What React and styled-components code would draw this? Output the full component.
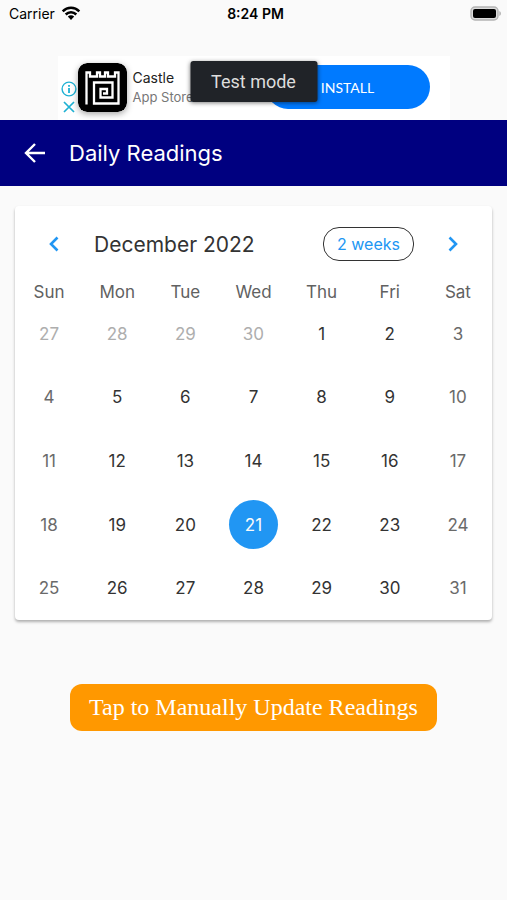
import { useState } from "react";
import styled, { createGlobalStyle } from "styled-components";

const weekdays = ["Sun", "Mon", "Tue", "Wed", "Thu", "Fri", "Sat"];

const weeks = [
  [27, 28, 29, 30, 1, 2, 3],
  [4, 5, 6, 7, 8, 9, 10],
  [11, 12, 13, 14, 15, 16, 17],
  [18, 19, 20, 21, 22, 23, 24],
  [25, 26, 27, 28, 29, 30, 31],
];

const StatusBar = () => (
  <Status>
    <Carrier>
      Carrier
      <svg width="20" height="15" viewBox="0 0 20 15" aria-hidden="true">
        <g fill="none" stroke="#000" strokeWidth="2.5">
          <path d="M1.7 5.3C6.4.6 13.6.6 18.3 5.3" />
          <path d="M4.7 8.5c3-3 7.6-3 10.6 0" />
        </g>
        <path d="M10 14l-3.2-3.4c1.8-1.7 4.6-1.7 6.4 0z" />
      </svg>
    </Carrier>
    <Clock>8:24 PM</Clock>
    <Battery>
      <svg width="32" height="15" viewBox="0 0 32 15" aria-hidden="true">
        <rect x="1" y="1" width="27" height="13" rx="4" fill="#ddd" stroke="#b4b4b4" strokeWidth="1.4" />
        <rect x="3" y="3" width="23" height="9" rx="2" />
        <path d="M29.3 5c2.2.8 2.2 4.2 0 5z" fill="#b4b4b4" />
      </svg>
    </Battery>
  </Status>
);

const AdBanner = () => (
  <Ad>
    <AdMarks>
      <button type="button" aria-label="Ad information">
        <svg width="16" height="16" viewBox="0 0 16 16">
          <circle cx="8" cy="8" r="6.9" fill="none" stroke="#1fb1d3" strokeWidth="1.4" />
          <path d="M8 7v5M8 4v1.8" stroke="#1fb1d3" strokeWidth="1.8" />
        </svg>
      </button>
      <button type="button" aria-label="Close ad">
        <svg width="16" height="16" viewBox="0 0 16 16">
          <path d="M3 3l10 10M13 3L3 13" stroke="#1fb1d3" strokeWidth="1.7" />
        </svg>
      </button>
    </AdMarks>
    <AdIcon viewBox="0 0 49 49" aria-hidden="true">
      <rect width="49" height="49" rx="9" />
      <path
        d="M8.5 41.5V9.500h3.500v4h7v-4h3v4h5v-4h3v4h7v-4h3.500V40.500H16V19.500H34.500V34.500H22.500V26H29V30.500H25"
        fill="none"
        stroke="#fff"
        strokeWidth="2.3"
      />
    </AdIcon>
    <AdText>
      <strong>Castle</strong>
      <span>App Store</span>
    </AdText>
    <Install type="button">INSTALL</Install>
    <TestMode>Test mode</TestMode>
  </Ad>
);

const App = () => {
  const [selected, setSelected] = useState("3-3");

  return (
    <Container>
      <GlobalStyle />
      <StatusBar />
      <AdBanner />
      <Header>
        <IconButton type="button" aria-label="Back">
          <svg width="24" height="24" viewBox="0 0 24 24">
            <path d="M22 12H3M12 3l-9 9 9 9" fill="none" stroke="#fff" strokeWidth="2.4" />
          </svg>
        </IconButton>
        <h1>Daily Readings</h1>
      </Header>
      <main>
        <Card>
          <CalendarHeader>
            <IconButton type="button" aria-label="Previous month">
              <svg width="24" height="24" viewBox="0 0 24 24">
                <path d="M15.500 5.500L9 12l6.500 6.500" fill="none" stroke="#2196f3" strokeWidth="2.6" />
              </svg>
            </IconButton>
            <h2>December 2022</h2>
            <FormatButton type="button">2 weeks</FormatButton>
            <IconButton type="button" aria-label="Next month">
              <svg width="24" height="24" viewBox="0 0 24 24">
                <path d="M8.500 5.500L15 12l-6.500 6.500" fill="none" stroke="#2196f3" strokeWidth="2.6" />
              </svg>
            </IconButton>
          </CalendarHeader>
          <Calendar>
            <thead>
              <tr>
                {weekdays.map((name) => (
                  <th key={name} scope="col">{name}</th>
                ))}
              </tr>
            </thead>
            <tbody>
              {weeks.map((week, row) => (
                <tr key={row}>
                  {week.map((day, col) => {
                    const id = `${row}-${col}`;
                    return (
                      <td key={id}>
                        <Day
                          type="button"
                          $outside={row === 0 && day > 7}
                          $weekend={col === 0 || col === 6}
                          $selected={selected === id}
                          aria-pressed={selected === id}
                          onClick={() => setSelected(id)}
                        >
                          {day}
                        </Day>
                      </td>
                    );
                  })}
                </tr>
              ))}
            </tbody>
          </Calendar>
        </Card>
        <UpdateButton type="button">Tap to Manually Update Readings</UpdateButton>
      </main>
    </Container>
  );
};

export default App;

const GlobalStyle = createGlobalStyle`
  * {
    box-sizing: border-box;
  }

  body {
    margin: 0;
    background-color: #fafafa;
    font-family: Inter, "Liberation Sans", sans-serif;
  }

  button {
    padding: 0;
    border: none;
    background: none;
    font-family: inherit;
    cursor: pointer;
  }

  svg {
    display: block;
  }
`;

const Container = styled.div`
  min-height: 100vh;
  background-color: #fafafa;
`;

const Status = styled.div`
  display: grid;
  grid-template-columns: 1fr auto 1fr;
  align-items: center;
  height: 27px;
  padding: 0 5px 0 9px;
  font-size: 14px;
  color: #000;
`;

const Carrier = styled.div`
  display: flex;
  align-items: center;
  gap: 6px;
`;

const Clock = styled.div`
  font-weight: 600;
`;

const Battery = styled.div`
  display: flex;
  justify-content: flex-end;
`;

const Ad = styled.section`
  position: relative;
  display: flex;
  align-items: center;
  width: 392px;
  max-width: 100%;
  height: 64px;
  margin: 29px auto 0;
  padding: 0 20px 2px 3px;
  background-color: #fff;
`;

const AdMarks = styled.div`
  display: flex;
  flex-direction: column;
  align-self: flex-end;
  gap: 2px;
  margin-bottom: 3px;
`;

const AdIcon = styled.svg`
  flex: none;
  width: 49px;
  height: 49px;
  margin-left: 1px;
  border-radius: 9px;
  box-shadow: 0 2px 6px rgba(0, 0, 0, 0.35);
`;

const AdText = styled.div`
  display: flex;
  flex-direction: column;
  flex: 1;
  gap: 1px;
  margin-left: 6px;
  line-height: 18px;

  strong {
    font-size: 14px;
    font-weight: 400;
    color: #222;
  }

  span {
    font-size: 13px;
    color: #777;
  }
`;

const Install = styled.button`
  width: 164px;
  height: 44px;
  border-radius: 22px;
  background-color: #007aff;
  color: #fff;
  font-family: Lato, sans-serif;
  font-size: 14px;
`;

const TestMode = styled.div`
  position: absolute;
  top: 5px;
  left: 50%;
  transform: translateX(-50%);
  width: 127px;
  border-radius: 3px;
  background-color: #202328;
  color: #ddd;
  font-family: Roboto, sans-serif;
  font-size: 18px;
  line-height: 41px;
  text-align: center;
  box-shadow: 0 1px 4px rgba(0, 0, 0, 0.5);
`;

const Header = styled.header`
  display: flex;
  align-items: center;
  gap: 22px;
  height: 66px;
  padding: 0 23px;
  background-color: #000080;

  h1 {
    margin: 0;
    color: #fff;
    font-size: 22px;
    font-weight: 400;
  }
`;

const IconButton = styled.button`
  flex: none;
`;

const Card = styled.section`
  margin: 20px 15px 0;
  border-radius: 4px;
  background-color: #fff;
  box-shadow: 0 2px 3px rgba(0, 0, 0, 0.3);
`;

const CalendarHeader = styled.div`
  display: flex;
  align-items: center;
  height: 76px;
  padding: 0 27px;

  h2 {
    flex: 1;
    margin: 0 0 0 28px;
    color: #333;
    font-size: 21px;
    font-weight: 400;
  }
`;

const FormatButton = styled.button`
  height: 34px;
  margin-right: 27px;
  padding: 0 13px;
  border: 1px solid #333;
  border-radius: 16px;
  color: #2196f3;
  font-size: 16px;
`;

const Calendar = styled.table`
  width: 100%;
  height: 338px;
  border-collapse: collapse;
  table-layout: fixed;
  text-align: center;

  th,
  td {
    padding: 0;
  }

  th {
    height: 20px;
    color: #616161;
    font-size: 17px;
    font-weight: 400;
    line-height: 20px;
  }
`;

const dayColor = ({ $selected, $outside, $weekend }) => {
  if ($selected) return "#fafafa";
  if ($outside) return "#aeaeae";
  return $weekend ? "#6a6a6a" : "#333";
};

const Day = styled.button`
  width: 49px;
  height: 49px;
  border-radius: 50%;
  background-color: ${(props) => (props.$selected ? "#2196f3" : "transparent")};
  color: ${dayColor};
  font-size: 17px;
`;

const UpdateButton = styled.button`
  display: block;
  margin: 64px auto 0;
  padding: 0 19px;
  border-radius: 12px;
  background-color: #ff9800;
  color: #fff;
  font-family: "Liberation Serif", serif;
  font-size: 24px;
  line-height: 47px;
`;
